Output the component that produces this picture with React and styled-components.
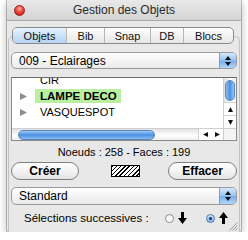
import React from 'react';
import styled, { createGlobalStyle, css } from 'styled-components';

const GlobalStyle = createGlobalStyle`
  html, body {
    margin: 0;
    padding: 0;
    background: #ffffff;
  }
  body {
    font-family: 'Liberation Sans', Arial, sans-serif;
    color: #000;
  }
`;

const Window = styled.div`
  position: relative;
  margin-left: 7px;
  width: 234px;
  height: 232px;
  display: flex;
  flex-direction: column;
  background: #e8e8e8;
  box-shadow: 0 0 0 1px rgba(0, 0, 0, 0.2), 0 3px 9px rgba(0, 0, 0, 0.32);
  border-radius: 0 0 2px 2px;
`;

const TitleBar = styled.div`
  height: 20px;
  display: flex;
  align-items: center;
  justify-content: center;
  position: relative;
  background: linear-gradient(#e9e9e9, #d4d4d4);
  border-bottom: 1px solid #a9a9a9;
  font-size: 12px;
  color: #2a2a2a;
`;

const CloseButton = styled.div`
  position: absolute;
  left: 7px;
  top: 5px;
  width: 11px;
  height: 11px;
  box-sizing: border-box;
  border-radius: 50%;
  border: 1px solid #9b1f1a;
  background: radial-gradient(circle at 50% 30%, #ffb2a6 0, #f0463b 45%, #b5150f 100%);
`;

const Panel = styled.div`
  margin: 15px 1px 0;
  flex: 1;
  border: 1px solid #c2c2c2;
  border-bottom: none;
  border-radius: 5px 5px 0 0;
  display: flex;
  flex-direction: column;
  padding: 0 2px;
`;

const Segmented = styled.div`
  align-self: center;
  margin-top: -10px;
  margin-left: -2px;
  display: flex;
  height: 15px;
  border: 1px solid #8a8a8a;
  border-radius: 5px;
  overflow: hidden;
  background: linear-gradient(#ffffff, #f1f1f1 55%, #e6e6e6);
`;

const Tab = styled.div`
  width: ${(p) => p.$w}px;
  display: flex;
  align-items: center;
  justify-content: center;
  font-size: 11px;
  color: #111;
  & + & {
    border-left: 1px solid #b7b7b7;
  }
  ${(p) =>
    p.$active &&
    css`
      background: linear-gradient(#e6f2fd, #c9e1f8 55%, #b4d4f4);
    `}
`;

const Popup = styled.div`
  margin-top: ${(p) => p.$mt}px;
  height: ${(p) => p.$h}px;
  display: flex;
  align-items: center;
  border: 1px solid #9a9a9a;
  border-radius: 5px;
  overflow: hidden;
  background: linear-gradient(#ffffff, #f3f3f3 55%, #eaeaea);
  font-size: 12px;
`;

const PopupLabel = styled.span`
  flex: 1;
  padding-left: 7px;
`;

const Stepper = styled.div`
  width: 16px;
  align-self: stretch;
  display: flex;
  align-items: center;
  justify-content: center;
  border-left: 1px solid #7b9fcf;
  background: linear-gradient(#d3e7fb, #9cc6f2 48%, #74adec 52%, #b3d8fb);
`;

const List = styled.div`
  margin-top: 8px;
  height: 62px;
  border: 1px solid #8a8a8a;
  border-top-color: #6e6e6e;
  background: #fff;
  display: grid;
  grid-template-columns: 1fr 13px;
  grid-template-rows: 1fr 12px;
`;

const Rows = styled.div`
  overflow: hidden;
`;

const RowsInner = styled.div`
  margin-top: -6px;
`;

const Row = styled.div`
  height: 16px;
  display: flex;
  align-items: center;
  padding-left: 8px;
`;

const TriSlot = styled.div`
  width: 15px;
  display: flex;
  align-items: center;
`;

const Label = styled.span`
  padding: 0 4px 0 5px;
  line-height: 14px;
  font-size: ${(p) => (p.$hl ? 11.5 : 11)}px;
  font-weight: ${(p) => (p.$hl ? 'bold' : 'normal')};
  background: ${(p) => (p.$hl ? '#b9f0a0' : 'transparent')};
`;

const VScroll = styled.div`
  border-left: 1px solid #cfcfcf;
  background: linear-gradient(to right, #e2e2e2, #ffffff 60%, #efefef);
  display: flex;
  flex-direction: column;
  align-items: center;
`;

const VThumb = styled.div`
  margin-top: 2px;
  width: 10px;
  height: 21px;
  border-radius: 5px;
  border: 1px solid #5b86c0;
  box-sizing: border-box;
  background: linear-gradient(to right, #8dbdf0, #4a8fe0 50%, #9ccaf6);
`;

const Spacer = styled.div`
  flex: 1;
`;

const ScrollArrow = styled.div`
  width: 100%;
  height: ${(p) => p.$h}px;
  display: flex;
  align-items: center;
  justify-content: center;
  border-top: 1px solid #d3d3d3;
  background: #fff;
`;

const HScroll = styled.div`
  border-top: 1px solid #cfcfcf;
  background: linear-gradient(#e2e2e2, #ffffff 60%, #efefef);
  display: flex;
  align-items: center;
`;

const HThumb = styled.div`
  margin-left: 6px;
  width: 137px;
  height: 10px;
  border-radius: 5px;
  border: 1px solid #5b86c0;
  box-sizing: border-box;
  background: linear-gradient(#9ccaf6, #4a8fe0 50%, #8dbdf0);
`;

const HArrows = styled.div`
  margin-left: auto;
  width: 24px;
  align-self: stretch;
  display: flex;
  background: #fff;
  border-left: 1px solid #d3d3d3;
`;

const HArrow = styled.div`
  flex: 1;
  display: flex;
  align-items: center;
  justify-content: center;
`;

const Corner = styled.div`
  border-top: 1px solid #cfcfcf;
  border-left: 1px solid #cfcfcf;
  background: #f4f4f4;
`;

const Stats = styled.div`
  margin-top: 5px;
  text-align: center;
  font-size: 11px;
  line-height: 12px;
`;

const ButtonRow = styled.div`
  margin-top: 4px;
  display: flex;
  align-items: center;
  justify-content: space-between;
`;

const PushButton = styled.div`
  width: ${(p) => p.$w}px;
  height: 16px;
  border: 1px solid #7e7e7e;
  border-radius: 9px;
  background: linear-gradient(#ffffff, #f2f2f2 55%, #e4e4e4);
  display: flex;
  align-items: center;
  justify-content: center;
  font-size: 12px;
  font-weight: bold;
`;

const Swatch = styled.div`
  width: 27px;
  height: 10px;
  margin-left: 3px;
  border: 1px solid #000;
  background: repeating-linear-gradient(135deg, #000 0 1px, #fff 1px 3px);
`;

const BottomRow = styled.div`
  margin-top: 3px;
  height: 20px;
  display: flex;
  align-items: center;
  padding-left: 13px;
  font-size: 11.5px;
`;

const RadioItem = styled.div`
  margin-left: ${(p) => p.$ml}px;
  display: flex;
  align-items: center;
  gap: 4px;
`;

const Radio = styled.div`
  width: 9px;
  height: 9px;
  box-sizing: border-box;
  border-radius: 50%;
  display: flex;
  align-items: center;
  justify-content: center;
  ${(p) =>
    p.$on
      ? css`
          border: 1px solid #4d78b3;
          background: linear-gradient(#cfe4fb, #7fb4ee);
        `
      : css`
          border: 1px solid #8c8c8c;
          background: linear-gradient(#f4f4f4, #ffffff);
        `}
`;

const Dot = styled.div`
  width: 3px;
  height: 3px;
  border-radius: 50%;
  background: #1b2f55;
`;

const Grip = styled.svg`
  position: absolute;
  right: 3px;
  bottom: 1px;
`;

const Tri = ({ dir = 'right', size = 7, color = '#8e8e8e' }) => {
  const s = size;
  const pts = {
    right: `0,0 ${s},${s / 2} 0,${s}`,
    left: `${s},0 0,${s / 2} ${s},${s}`,
    up: `0,${s} ${s / 2},0 ${s},${s}`,
    down: `0,0 ${s},0 ${s / 2},${s}`,
  }[dir];
  return (
    <svg width={s} height={s} viewBox={`0 0 ${s} ${s}`}>
      <polygon points={pts} fill={color} />
    </svg>
  );
};

const StepperIcon = () => (
  <svg width="6" height="10" viewBox="0 0 6 10">
    <polygon points="0,4 3,0 6,4" fill="#111" />
    <polygon points="0,6 6,6 3,10" fill="#111" />
  </svg>
);

const BigArrow = ({ up }) => (
  <svg width="9" height="12" viewBox="0 0 9 12">
    {up ? (
      <g fill="#000">
        <polygon points="0,6 4.5,0 9,6" />
        <rect x="3" y="5" width="3" height="7" />
      </g>
    ) : (
      <g fill="#000">
        <rect x="3" y="0" width="3" height="7" />
        <polygon points="0,6 9,6 4.5,12" />
      </g>
    )}
  </svg>
);

const tabs = [
  { label: 'Objets', w: 53, active: true },
  { label: 'Bib', w: 37 },
  { label: 'Snap', w: 45 },
  { label: 'DB', w: 32 },
  { label: 'Blocs', w: 49 },
];

const items = [
  { label: 'CIR', leaf: true },
  { label: 'LAMPE DECO', hl: true },
  { label: 'VASQUESPOT' },
];

const App = () => {
  return (
    <>
      <GlobalStyle />
      <Window>
        <TitleBar>
          <CloseButton />
          Gestion des Objets
        </TitleBar>
        <Panel>
          <Segmented>
            {tabs.map((t) => (
              <Tab key={t.label} $w={t.w} $active={t.active}>
                {t.label}
              </Tab>
            ))}
          </Segmented>

          <Popup $mt={8} $h={15}>
            <PopupLabel>009 - Eclairages</PopupLabel>
            <Stepper>
              <StepperIcon />
            </Stepper>
          </Popup>

          <List>
            <Rows>
              <RowsInner>
                {items.map((it) => (
                  <Row key={it.label}>
                    <TriSlot>{!it.leaf && <Tri dir="right" size={7} />}</TriSlot>
                    <Label $hl={it.hl}>{it.label}</Label>
                  </Row>
                ))}
              </RowsInner>
            </Rows>
            <VScroll>
              <VThumb />
              <Spacer />
              <ScrollArrow $h={12}>
                <Tri dir="up" size={5} color="#111" />
              </ScrollArrow>
              <ScrollArrow $h={12}>
                <Tri dir="down" size={5} color="#111" />
              </ScrollArrow>
            </VScroll>
            <HScroll>
              <HThumb />
              <HArrows>
                <HArrow>
                  <Tri dir="left" size={5} color="#111" />
                </HArrow>
                <HArrow>
                  <Tri dir="right" size={5} color="#111" />
                </HArrow>
              </HArrows>
            </HScroll>
            <Corner />
          </List>

          <Stats>Noeuds : 258 - Faces : 199</Stats>

          <ButtonRow>
            <PushButton $w={66}>Créer</PushButton>
            <Swatch />
            <PushButton $w={67}>Effacer</PushButton>
          </ButtonRow>

          <Popup $mt={7} $h={16}>
            <PopupLabel>Standard</PopupLabel>
            <Stepper>
              <StepperIcon />
            </Stepper>
          </Popup>

          <BottomRow>
            Sélections successives :
            <RadioItem $ml={16}>
              <Radio />
              <BigArrow />
            </RadioItem>
            <RadioItem $ml={19}>
              <Radio $on>
                <Dot />
              </Radio>
              <BigArrow up />
            </RadioItem>
          </BottomRow>
        </Panel>
        <Grip width="9" height="9" viewBox="0 0 9 9">
          <g stroke="#9a9a9a" strokeWidth="1">
            <line x1="8.5" y1="0.5" x2="0.5" y2="8.5" />
            <line x1="8.5" y1="3.5" x2="3.5" y2="8.5" />
            <line x1="8.5" y1="6.5" x2="6.5" y2="8.5" />
          </g>
        </Grip>
      </Window>
    </>
  );
};

export default App;
